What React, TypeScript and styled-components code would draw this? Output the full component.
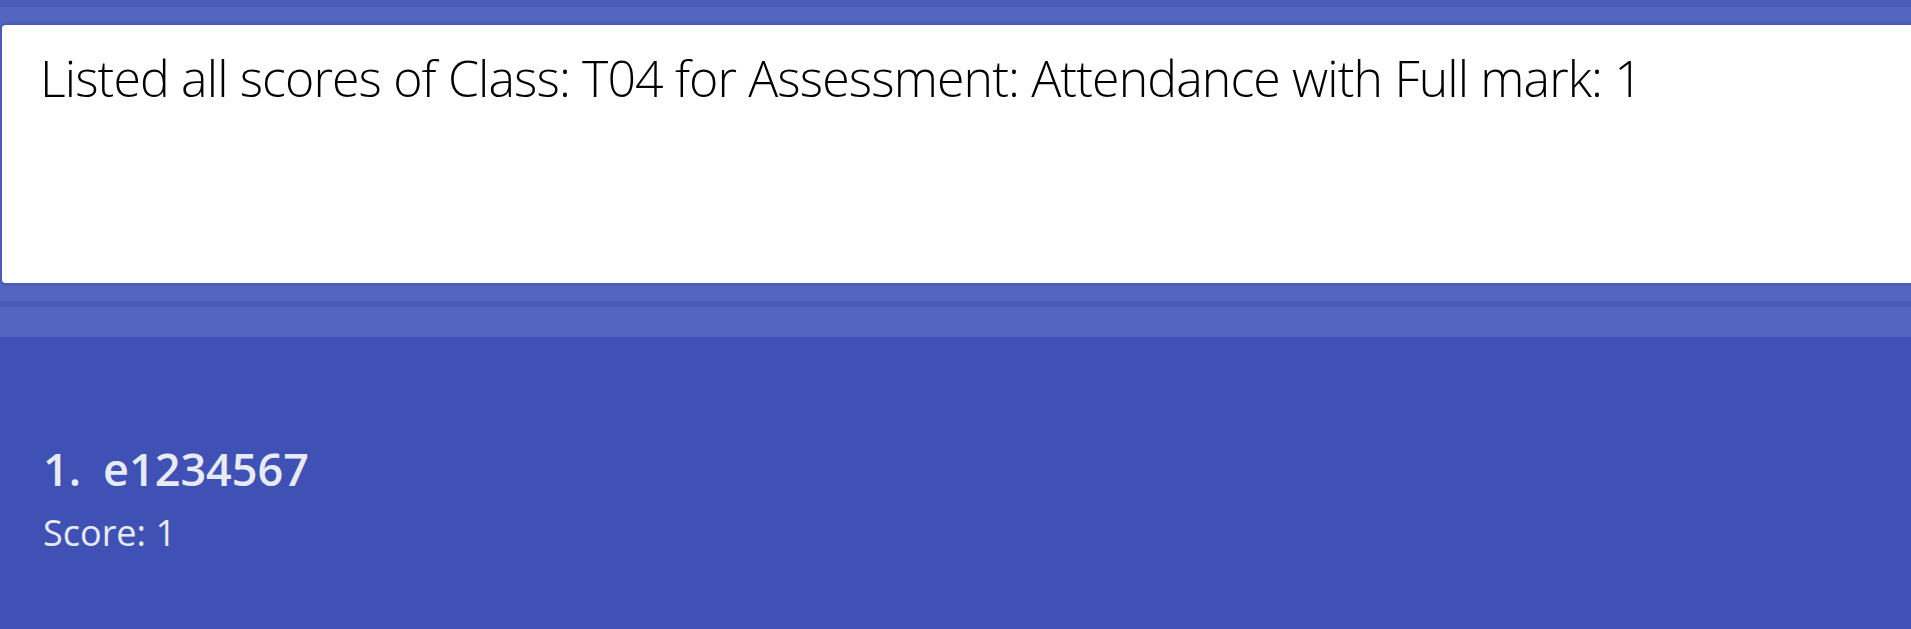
import React from "react";
import styled, { createGlobalStyle } from "styled-components";

const GlobalStyle = createGlobalStyle`
  html, body {
    margin: 0;
    padding: 0;
    background: #3f51b5;
    overflow: hidden;
  }
`;

const Page = styled.div`
  width: 1911px;
  height: 629px;
  display: flex;
  flex-direction: column;
  background: #3f51b5;
  font-family: "Open Sans", "Noto Sans", sans-serif;
`;

const TopStrip = styled.div`
  height: 7px;
  background: #4a5bb8;
`;

const ResultPane = styled.div`
  background: #5366bf;
  padding: 15px 0 15px 0;
`;

const ResultBox = styled.div`
  box-sizing: border-box;
  height: 264px;
  margin-right: -10px;
  background: #ffffff;
  border-top: 3px solid #4a5bb8;
  border-bottom: 3px solid #4a5bb8;
  border-left: 2px solid #4a5bb8;
  border-radius: 6px;
  padding: 23px 0 0 38px;
`;

const ResultText = styled.div`
  font-family: "Open Sans", "Noto Sans", sans-serif;
  font-weight: 300;
  font-size: 50px;
  letter-spacing: -0.87px;
  line-height: 1.2;
  color: #000;
  white-space: nowrap;
`;

const Divider = styled.div`
  height: 6px;
  background: #4a5bb8;
`;

const Spacer = styled.div`
  height: 30px;
  background: #5366bf;
`;

const ListArea = styled.div`
  flex: 1;
  padding: 105px 0 0 43px;
  color: #e8eaf6;
`;

const Card = styled.div`
  display: flex;
  flex-direction: column;
`;

const TitleRow = styled.div`
  display: flex;
  align-items: baseline;
  font-weight: 600;
  font-size: 45px;
  line-height: 1.2;
  white-space: nowrap;
`;

const Index = styled.span`
  width: 60px;
`;

const Detail = styled.div`
  font-weight: 400;
  font-size: 36px;
  line-height: 1.2;
  margin-top: 15px;
`;

export default function App() {
  return (
    <>
      <GlobalStyle />
      <Page>
        <TopStrip />
        <ResultPane>
          <ResultBox>
            <ResultText>
              Listed all scores of Class: T04 for Assessment: Attendance with Full mark: 1
            </ResultText>
          </ResultBox>
        </ResultPane>
        <Divider />
        <Spacer />
        <ListArea>
          <Card>
            <TitleRow>
              <Index>1.</Index>
              <span>e1234567</span>
            </TitleRow>
            <Detail>Score: 1</Detail>
          </Card>
        </ListArea>
      </Page>
    </>
  );
}
